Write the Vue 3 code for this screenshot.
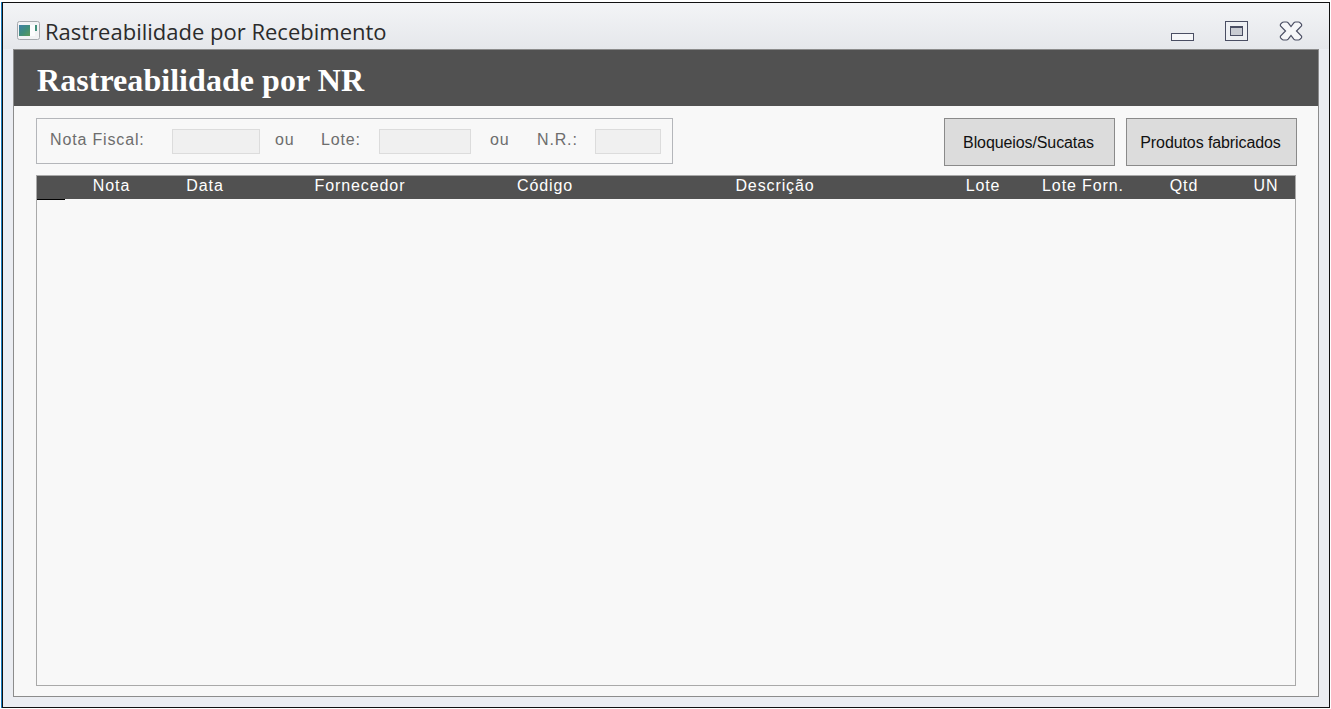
<template>
  <div class="frame">
    <div class="window">
      <div class="titlebar">
        <svg class="app-icon" width="23" height="19" viewBox="0 0 23 19">
          <defs>
            <linearGradient id="appFill" x1="0" y1="0" x2="1" y2="1">
              <stop offset="0" stop-color="#3f7fa8" />
              <stop offset="0.55" stop-color="#3f8f7a" />
              <stop offset="1" stop-color="#5f9a5a" />
            </linearGradient>
          </defs>
          <rect x="0.5" y="0.5" width="22" height="18" rx="2" fill="#f2f3f5" stroke="#a4a8ad" />
          <rect x="2" y="4" width="11" height="11" fill="url(#appFill)" />
          <rect x="13" y="4" width="5" height="11" fill="#fbfcfd" />
          <rect x="18" y="4" width="2" height="6" fill="#3f8f7a" />
        </svg>
        <span class="window-title">Rastreabilidade por Recebimento</span>
        <div class="window-btns">
          <svg class="btn-min" width="23" height="8" viewBox="0 0 23 8">
            <rect x="0.5" y="0.5" width="22" height="7" fill="#f6f7f9" stroke="#4a4e63" />
          </svg>
          <svg width="23" height="20" viewBox="0 0 23 20">
            <rect x="0.5" y="0.5" width="22" height="19" fill="#eef0f3" stroke="#4a4e63" />
            <rect x="5.5" y="5.5" width="12" height="9" fill="#c9ccd3" stroke="#4a4e63" />
            <rect x="5" y="5" width="13" height="2" fill="#4a4e63" />
          </svg>
          <svg width="24" height="20" viewBox="0 0 24 20">
            <path d="M5 1 H7.5 Q8.5 1 9.2 1.8 L12 5.5 L14.8 1.8 Q15.5 1 16.5 1 H19.5 Q20.5 1 21.2 1.8 L22.4 3.2 Q23 4 22.5 5 L17.5 10 L22.5 15 Q23 16 22.4 16.8 L21.2 18.2 Q20.5 19 19.5 19 H16.5 Q15.5 19 14.8 18.2 L12 14.5 L9.2 18.2 Q8.5 19 7.5 19 H4.5 Q3.5 19 2.8 18.2 L1.6 16.8 Q1 16 1.5 15 L6.5 10 L1.5 5 Q1 4 1.6 3.2 L2.8 1.8 Q3.5 1 5 1 Z" fill="#f6f7f9" stroke="#4a4e63" stroke-width="1.2" />
          </svg>
        </div>
      </div>
      <div class="panel">
        <div class="panel-head">Rastreabilidade por NR</div>
        <div class="toolbar">
          <div class="filters">
            <span class="lbl lbl-nota">Nota Fiscal:</span>
            <input class="field field-nota" type="text" />
            <span class="lbl lbl-ou">ou</span>
            <span class="lbl lbl-lote">Lote:</span>
            <input class="field field-lote" type="text" />
            <span class="lbl lbl-ou2">ou</span>
            <span class="lbl lbl-nr">N.R.:</span>
            <input class="field field-nr" type="text" />
          </div>
          <div class="actions">
            <button class="action">Bloqueios/Sucatas</button>
            <button class="action">Produtos fabricados</button>
          </div>
        </div>
        <div class="grid-box">
          <div class="grid-head">
            <div class="corner"></div>
            <div v-for="col in columns" :key="col.name" class="col" :style="{ width: col.width + 'px' }">{{ col.name }}</div>
          </div>
        </div>
      </div>
    </div>
  </div>
</template>

<script setup>
const columns = [
  { name: 'Nota', width: 93 },
  { name: 'Data', width: 94 },
  { name: 'Fornecedor', width: 216 },
  { name: 'Código', width: 154 },
  { name: 'Descrição', width: 306 },
  { name: 'Lote', width: 110 },
  { name: 'Lote Forn.', width: 90 },
  { name: 'Qtd', width: 112 },
  { name: 'UN', width: 52 }
]
</script>

<style>
html,
body {
  margin: 0;
  background: #fff;
}
</style>

<style scoped>
.frame {
  box-sizing: border-box;
  width: 1331px;
  height: 709px;
  padding: 2px 1px 1px 2px;
  background: #fff;
}

.window {
  box-sizing: border-box;
  height: 100%;
  border: 1px solid #111;
  box-shadow: -1px 0 0 #1e7fc0;
  background: #ebedf2;
  padding: 0 10px 10px 10px;
  display: flex;
  flex-direction: column;
  font-family: "Liberation Sans", Arial, sans-serif;
}

.titlebar {
  height: 46px;
  flex: none;
  display: flex;
  align-items: flex-start;
  margin: 0 -10px;
  padding: 18px 26px 0 14px;
  box-sizing: border-box;
  background: linear-gradient(#f3f4f6, #e5e7eb);
}

.app-icon {
  flex: none;
}

.window-title {
  margin: -2px 0 0 5px;
  font-family: "Open Sans", "Noto Sans", sans-serif;
  font-size: 22px;
  line-height: 24px;
  color: #2b2b2b;
  white-space: nowrap;
}

.window-btns {
  margin-left: auto;
  display: flex;
  align-items: flex-start;
  gap: 31px;
}

.btn-min {
  margin-top: 12px;
}

.panel {
  flex: 1;
  display: flex;
  flex-direction: column;
  min-height: 0;
  background: #f8f8f8;
  border: 1px solid #8c8c8c;
}

.panel-head {
  height: 56px;
  flex: none;
  background: #515151;
  color: #fff;
  font-family: "Liberation Serif", "Times New Roman", serif;
  font-weight: bold;
  font-size: 32px;
  letter-spacing: 0.05px;
  line-height: 61px;
  padding-left: 23px;
}

.toolbar {
  display: flex;
  justify-content: space-between;
  align-items: flex-start;
  padding: 12px 21px 0 22px;
  flex: none;
}

.filters {
  box-sizing: border-box;
  width: 637px;
  height: 46px;
  border: 1px solid #b4b6ba;
  display: flex;
  align-items: center;
  padding-left: 13px;
}

.lbl {
  font-size: 16px;
  color: #6d6d6d;
  letter-spacing: 0.85px;
  white-space: nowrap;
  margin-top: -2px;
}

.lbl-nota { width: 122px; }
.lbl-ou { margin-left: 15px; width: 46px; }
.lbl-lote { width: 58px; }
.lbl-ou2 { margin-left: 19px; width: 47px; }
.lbl-nr { width: 58px; }

.field {
  box-sizing: border-box;
  height: 25px;
  padding: 0;
  background: #f0f0f0;
  border: 1px solid #dcdcdc;
  outline: none;
}

.field-nota { width: 88px; }
.field-lote { width: 92px; }
.field-nr { width: 66px; }

.actions {
  display: flex;
  gap: 11px;
}

.action {
  box-sizing: border-box;
  width: 171px;
  height: 48px;
  background: #dcdcdc;
  border: 1px solid #8a8a8a;
  color: #111;
  font-family: "Liberation Sans", Arial, sans-serif;
  font-size: 16px;
  letter-spacing: -0.1px;
  padding: 2px 2px 0 0;
}

.grid-box {
  box-sizing: border-box;
  margin: 9px 22px 10px 22px;
  flex: 1;
  min-height: 0;
  border: 1px solid #a9a9a9;
}

.grid-head {
  height: 23px;
  background: #515151;
  display: flex;
}

.corner {
  width: 28px;
  flex: none;
  height: 24px;
  box-sizing: border-box;
  border-bottom: 1px solid #000;
}

.col {
  flex: none;
  text-align: center;
  color: #fff;
  font-size: 16px;
  letter-spacing: 0.9px;
  line-height: 20px;
  white-space: nowrap;
}
</style>
